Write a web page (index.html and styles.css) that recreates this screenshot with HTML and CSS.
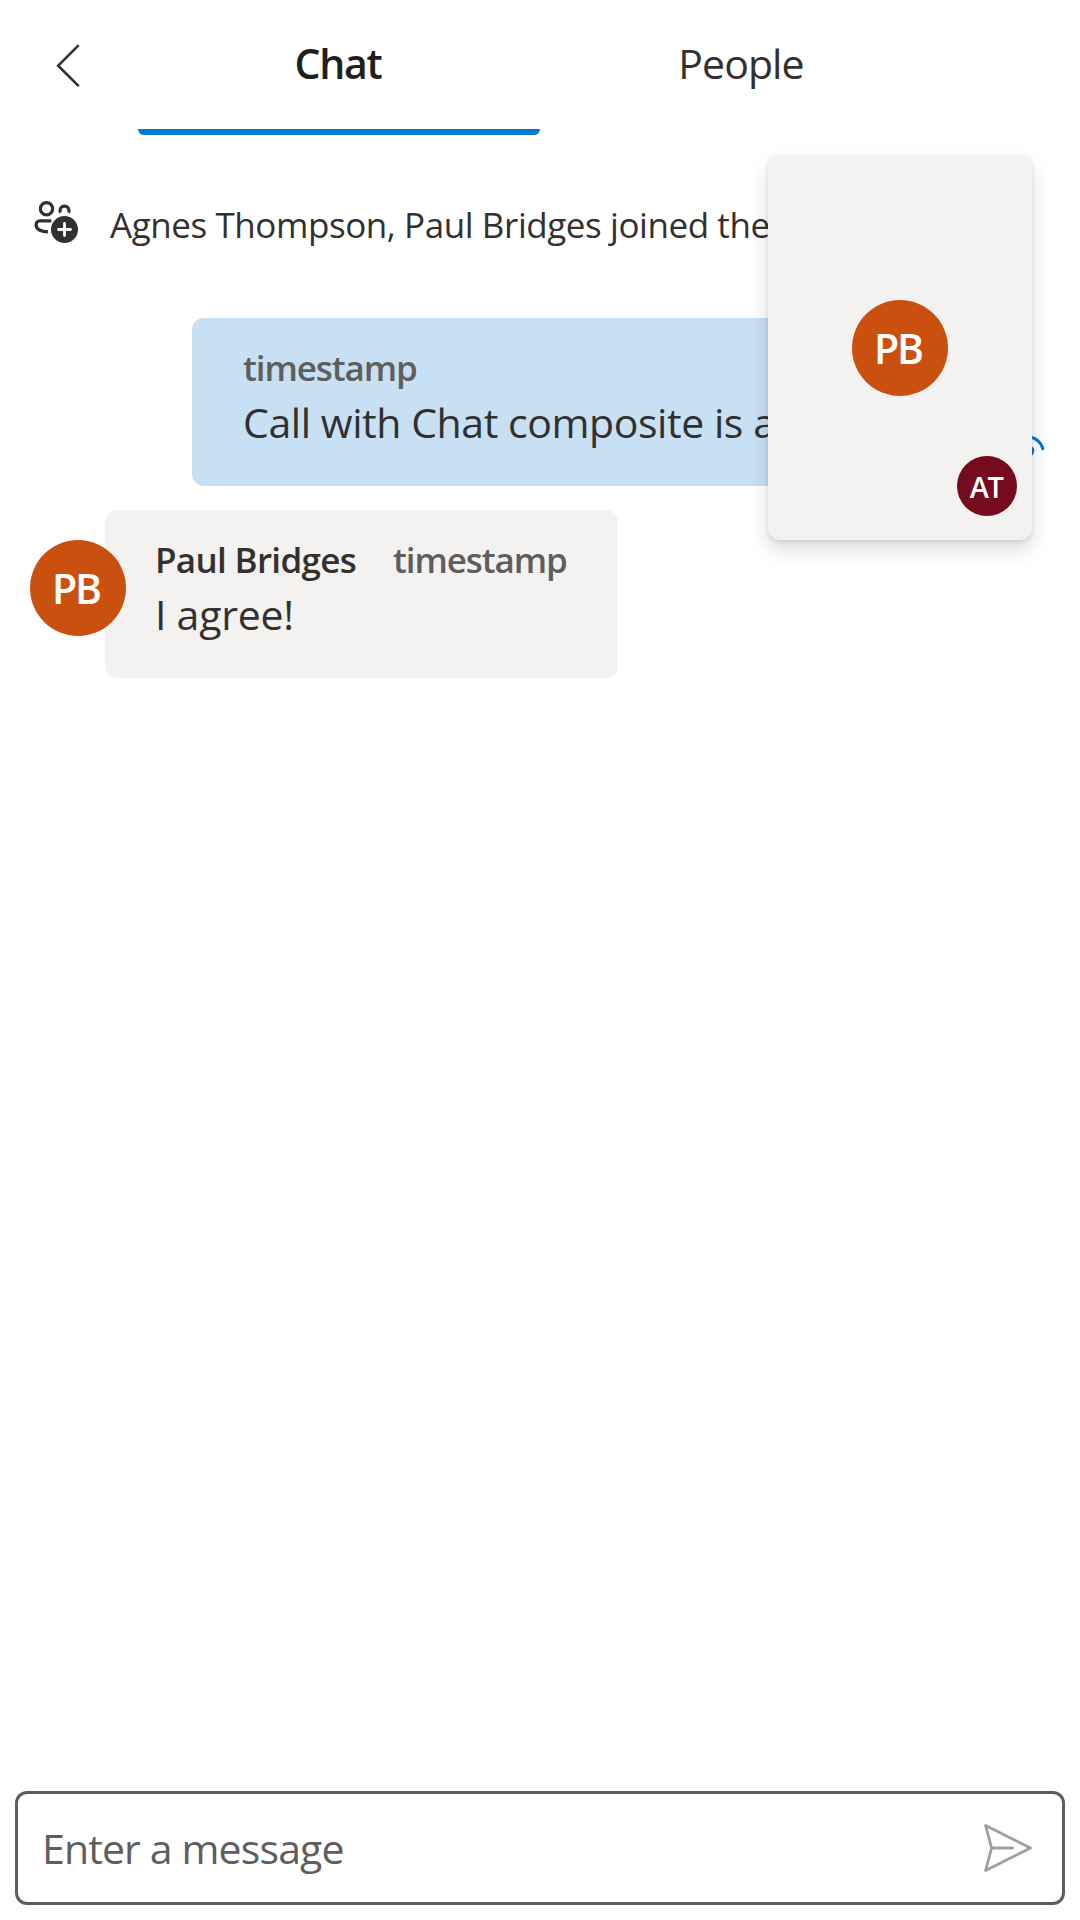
FILE: index.html
```html
<!DOCTYPE html>
<html lang="en">
<head>
<meta charset="utf-8">
<title>Chat</title>
<link rel="stylesheet" href="styles.css">
</head>
<body>
<main class="app">
  <header class="header">
    <button class="back" aria-label="Back">
      <svg width="24" height="44" viewBox="0 0 24 44" fill="none" stroke="#323130" stroke-width="2.6"><path d="M22.7 1.2 2.2 21.7 22.7 42.2"/></svg>
    </button>
    <nav class="tabs">
      <button class="tab tab-active">Chat</button>
      <button class="tab tab-people">People</button>
    </nav>
  </header>

  <section class="thread">
    <div class="system">
      <svg class="system-icon" width="46" height="44" viewBox="0 0 46 44" fill="none" stroke="#323130" stroke-width="3.2">
        <circle cx="12.5" cy="8.7" r="6.1"/>
        <path d="M26.4 12.8A4.6 4.6 0 1 1 34.6 12.8"/>
        <path d="M17.3 20.8H5.8A3.7 3.7 0 0 0 2.1 24.5C2.1 29.6 7.2 31.6 14 31.8"/>
        <circle cx="30.5" cy="29.5" r="13.5" fill="#323130" stroke="none"/>
        <path d="M30.5 23.5v12M24.5 29.5h12" stroke="#fff" stroke-width="2.8" stroke-linecap="round"/>
      </svg>
      <span class="system-text">Agnes Thompson, Paul Bridges joined the chat</span>
    </div>

    <div class="row row-mine">
      <div class="bubble bubble-mine">
        <div class="meta"><span class="time">timestamp</span></div>
        <p class="text">Call with Chat composite is awesome!</p>
      </div>
      <svg class="status" width="36" height="36" viewBox="0 0 36 36" fill="none" stroke="#0078d4" stroke-width="3" stroke-linecap="round">
        <path d="M3.2 15.8a15.2 15.2 0 0 1 29.6 0"/>
        <circle cx="18" cy="18" r="4.7"/>
      </svg>
    </div>

    <div class="row row-other">
      <div class="avatar avatar-pb">PB</div>
      <div class="bubble bubble-other">
        <div class="meta"><span class="name">Paul Bridges</span><span class="time">timestamp</span></div>
        <p class="text text-short">I agree!</p>
      </div>
    </div>
  </section>

  <footer class="composer">
    <span class="placeholder">Enter a message</span>
    <svg width="50" height="50" viewBox="0 0 50 50" fill="none" stroke="#a19f9d" stroke-width="2.8" stroke-linejoin="round" stroke-linecap="round">
      <path d="M2.6 2.6 47.4 25 2.6 47.4 8.6 25ZM8.6 25H29.5"/>
    </svg>
  </footer>

  <aside class="pip">
    <div class="avatar avatar-pb">PB</div>
    <div class="avatar avatar-at">AT</div>
  </aside>
</main>
</body>
</html>
```
FILE: styles.css
```css
* {
  box-sizing: border-box;
}

body {
  margin: 0;
  background: #fff;
  color: #323130;
  font-family: "Open Sans", sans-serif;
}

button {
  border: 0;
  padding: 0;
  background: none;
  color: inherit;
  font: inherit;
}

.app {
  position: relative;
  display: flex;
  flex-direction: column;
  height: 1920px;
  overflow: hidden;
}

.header {
  display: flex;
  height: 135px;
}

.back {
  display: flex;
  width: 138px;
  padding: 44px 0 0 56px;
}

.tabs {
  display: flex;
}

.tab {
  width: 402px;
  height: 135px;
  padding-bottom: 9px;
  font-size: 41px;
  line-height: 56px;
}

.tab-active {
  padding-bottom: 3px;
  padding-right: 2px;
  border-bottom: 6px solid #0078d4;
  border-radius: 0 0 6px 6px;
  color: #201f1e;
  font-weight: 600;
  letter-spacing: -1.3px;
}

.tab-people {
  letter-spacing: -0.9px;
}

.thread {
  flex: 1;
  display: flex;
  flex-direction: column;
  padding-top: 65px;
}

.system {
  display: flex;
  height: 118px;
  padding-left: 34px;
}

.system-icon {
  flex: none;
  margin-right: 30px;
}

.system-text {
  font-size: 35px;
  line-height: 49px;
  letter-spacing: -0.43px;
  white-space: nowrap;
}

.row {
  display: flex;
}

.row-mine {
  align-items: flex-end;
  gap: 12px;
  height: 168px;
  margin-bottom: 24px;
  padding-left: 192px;
}

.bubble {
  height: 168px;
  border-radius: 12px;
}

.bubble-mine {
  width: 806px;
  padding: 26px 0 0 51px;
  background: #c7e0f4;
}

.status {
  margin-bottom: 17px;
}

.row-other {
  padding-left: 30px;
}

.bubble-other {
  width: 513px;
  margin-left: -21px;
  padding: 26px 0 0 50px;
  background: #f3f2f1;
}

.meta {
  display: flex;
  gap: 37px;
  font-size: 35px;
  line-height: 48px;
  font-weight: 600;
}

.name {
  letter-spacing: -0.68px;
}

.time {
  color: #605e5c;
  letter-spacing: -1.1px;
}

.text {
  margin: 0;
  font-size: 41px;
  line-height: 60px;
  letter-spacing: -0.43px;
  white-space: nowrap;
}

.text-short {
  letter-spacing: -0.25px;
}

.avatar {
  display: flex;
  flex: none;
  align-items: center;
  justify-content: center;
  border-radius: 50%;
  color: #fff;
  font-weight: 600;
}

.avatar-pb {
  z-index: 1;
  width: 96px;
  height: 96px;
  padding: 0 4px 1px 0;
  background: #ca5010;
  font-size: 41px;
  letter-spacing: -2px;
}

.row-other .avatar-pb {
  margin-top: 30px;
}

.avatar-at {
  position: absolute;
  right: 15px;
  bottom: 24px;
  width: 60px;
  height: 60px;
  padding-right: 2px;
  background: #750b1c;
  font-size: 29px;
  letter-spacing: -1.6px;
}

.composer {
  display: flex;
  align-items: center;
  justify-content: space-between;
  height: 114px;
  margin: 0 15px 15px;
  padding: 0 29px 0 24px;
  border: 3px solid #605e5c;
  border-radius: 12px;
}

.placeholder {
  color: #605e5c;
  font-size: 41px;
  line-height: 56px;
  letter-spacing: -0.86px;
}

.pip {
  position: absolute;
  z-index: 2;
  top: 156px;
  left: 768px;
  display: flex;
  align-items: center;
  justify-content: center;
  width: 264px;
  height: 384px;
  border-radius: 12px;
  background: #f3f2f1;
  box-shadow: 0 9.6px 21.6px rgba(0, 0, 0, 0.132), 0 1.8px 5.4px rgba(0, 0, 0, 0.108);
}
```
